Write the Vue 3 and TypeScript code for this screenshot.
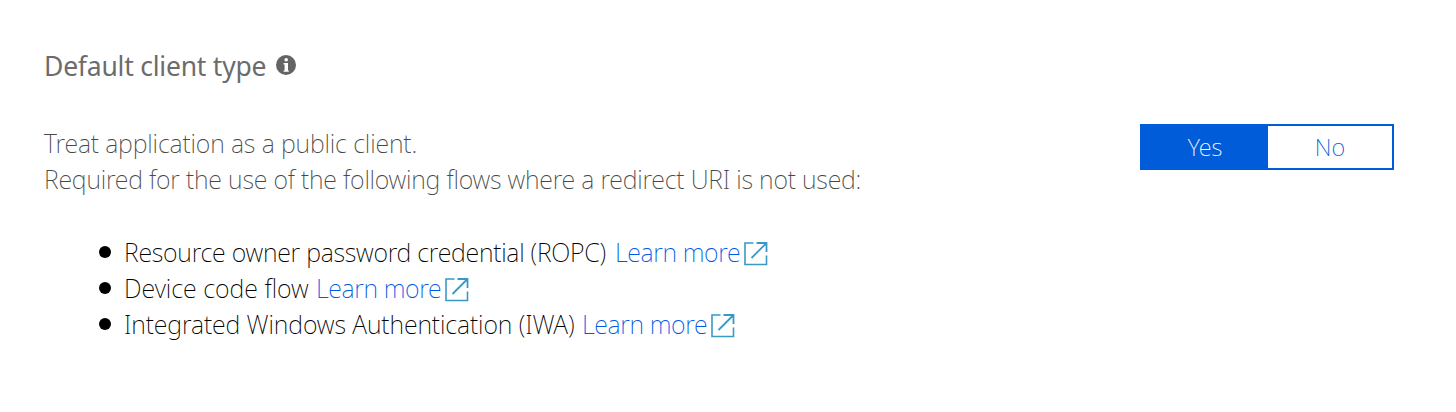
<script setup lang="ts">
import { ref } from 'vue'

interface Flow {
  id: string
  label: string
}

const flows: Flow[] = [
  { id: 'ropc', label: 'Resource owner password credential (ROPC)' },
  { id: 'device', label: 'Device code flow' },
  { id: 'iwa', label: 'Integrated Windows Authentication (IWA)' },
]

const isPublic = ref<boolean>(true)
</script>

<template>
  <section class="panel">
    <h2 class="heading">
      <span class="heading-text">Default client type</span>
      <svg class="info" viewBox="0 0 20 20" aria-hidden="true">
        <circle cx="10" cy="10" r="10" fill="#646464" />
        <circle cx="10.2" cy="4.8" r="1.8" fill="#fff" />
        <path d="M7.6 8H12V15.4H12.8V16.8H7.6V15.4H8.6V9.6H7.6Z" fill="#fff" />
      </svg>
    </h2>
    <div class="row">
      <div class="description">
        <p class="line first">Treat application as a public client.</p>
        <p class="line second">Required for the use of the following flows where a redirect URI is not used:</p>
      </div>
      <div class="toggle" role="group">
        <button class="option" :class="{ active: isPublic }" type="button" @click="isPublic = true">Yes</button>
        <button class="option" :class="{ active: !isPublic }" type="button" @click="isPublic = false">No</button>
      </div>
    </div>
    <ul class="flows">
      <li v-for="flow in flows" :key="flow.id" class="flow">
        <span class="bullet"></span>
        <span :class="['label', flow.id]">{{ flow.label }}</span>
        <a class="link" href="#">Learn more</a>
        <svg class="external" viewBox="0 0 24 24" fill="none" stroke="#3999c6" aria-hidden="true">
          <path d="M9.5 1H1V22.5H22.5V13.5" stroke-width="1.6" />
          <path d="M12.5 1H22.5V10M22.5 1L7.5 16" stroke-width="1.8" />
        </svg>
      </li>
    </ul>
  </section>
</template>

<style>
body {
  margin: 0;
  background: #fff;
}
</style>

<style scoped>
.panel {
  box-sizing: border-box;
  height: 412px;
  padding: 48px 62px 0 44px;
  font-family: 'Noto Sans', 'Open Sans', sans-serif;
  font-size: 25px;
  font-weight: 200;
  line-height: 36px;
  white-space: nowrap;
}
.heading {
  display: flex;
  margin: 0;
  height: 36px;
  font-size: 26.5px;
  font-weight: 400;
  letter-spacing: -0.22px;
  color: #6c6c6c;
}
.heading-text {
  width: 232px;
}
.info {
  width: 20px;
  height: 20px;
  margin-top: 7px;
}
.row {
  display: flex;
  justify-content: space-between;
  margin-top: 40px;
}
.description {
  padding-top: 1px;
  color: #484848;
}
.line {
  margin: 0;
}
.first {
  letter-spacing: -0.14px;
}
.second {
  letter-spacing: -0.21px;
}
.toggle {
  box-sizing: border-box;
  display: flex;
  width: 254px;
  height: 46px;
  border: 2px solid #015cda;
}
.option {
  flex: 1;
  border: 0;
  padding: 0;
  background: #fff;
  color: #015cda;
  font: inherit;
  font-size: 23.5px;
}
.option.active {
  flex: 0 0 126px;
  background: #015cda;
  color: #fff;
}
.flows {
  list-style: none;
  margin: 37px 0 0;
  padding: 0 0 0 55px;
  color: #000;
}
.flow {
  display: flex;
  height: 36px;
}
.bullet {
  width: 12px;
  height: 12px;
  margin: 12px 13px 0 0;
  border-radius: 50%;
  background: #000;
}
.label {
  width: 491px;
  letter-spacing: -0.25px;
}
.label.device {
  width: 192px;
  letter-spacing: 0;
}
.label.iwa {
  width: 458px;
  letter-spacing: -0.1px;
}
.link {
  width: 125px;
  letter-spacing: -0.38px;
  color: #0058e6;
  text-decoration: none;
}
.external {
  width: 24px;
  height: 24px;
  margin: 8px 0 0 4px;
}
</style>
